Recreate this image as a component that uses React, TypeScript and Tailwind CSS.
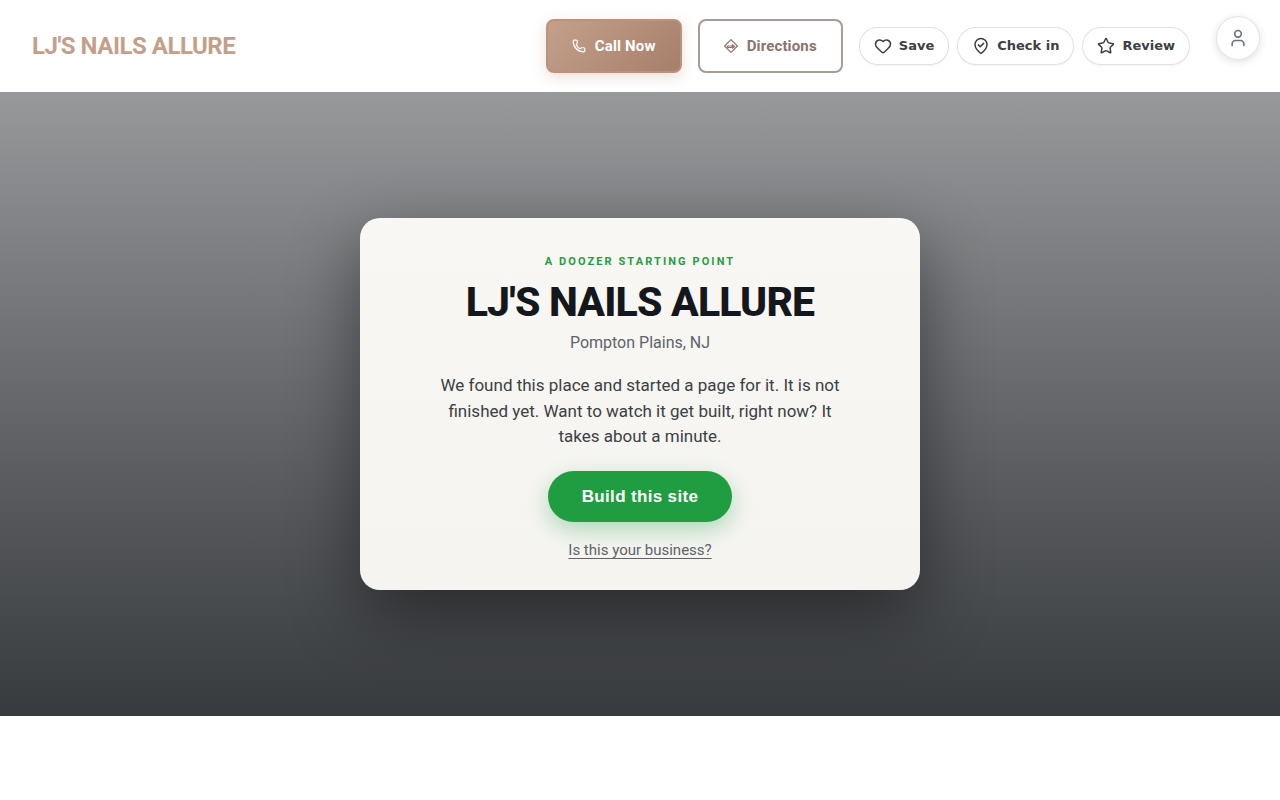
import { Heart, Phone, Star, User } from "lucide-react";
import type { ReactNode } from "react";

interface TypePill {
    label: string,
    icon: ReactNode
}

function DirectionsIcon() {
    return (
        <svg className="h-3.5 w-3.5" viewBox="0 0 24 24" fill="none" stroke="currentColor" strokeWidth="2" strokeLinejoin="round" aria-hidden="true">
            <path d="M12 1 23 12 12 23 1 12z" />
            <path d="M6 15v-3h10M6 14.500h10" />
            <path d="m14 8.500 5 4.500-5 3.500z" fill="currentColor" strokeWidth="1" />
        </svg>
    );
}

function CheckPinIcon() {
    return (
        <svg className="h-[18px] w-[18px]" viewBox="0 0 24 24" fill="none" stroke="currentColor" strokeWidth="2" strokeLinecap="round" strokeLinejoin="round" aria-hidden="true">
            <path d="M12 22s8-6 8-12a8 8 0 1 0-16 0c0 6 8 12 8 12z" />
            <path d="m8.500 10.500 2.500 2.500 4.500-4.500" />
        </svg>
    );
}

function Pill({ label, icon }: TypePill) {
    return (
        <button
            type="button"
            className="
                flex h-[38px] items-center gap-[7px] rounded-full border border-black/12 bg-white px-3.5
                font-['DejaVu_Sans',sans-serif] text-[13px] font-bold text-[#3c4043] shadow-xs
            "
        >
            {icon}
            {label}
        </button>
    );
}

function Header() {
    return (
        <header className="flex min-h-[92px] items-center bg-white pl-8">
            <a href="#" className="mr-auto text-2xl font-bold tracking-[-0.02em] text-[#c4a08a]">
                LJ'S NAILS ALLURE
            </a>
            <div className="flex items-center gap-4">
                <a
                    href="#call"
                    className="
                        flex h-[54px] items-center gap-[9px] rounded-lg border-2 border-[#bd917b] px-6
                        bg-linear-135 from-[#c4a08a] to-[#a67f6b] text-[15px] font-bold tracking-[0.01em] text-white
                        shadow-[0_4px_14px_rgba(196,160,138,0.35)]
                    "
                >
                    <Phone size={14} />
                    Call Now
                </a>
                <a
                    href="#directions"
                    className="
                        flex h-[54px] items-center gap-[9px] rounded-lg border-2 border-[#a89a95] px-6
                        text-[15px] font-bold tracking-[0.01em] text-[#8b736b]
                    "
                >
                    <DirectionsIcon />
                    Directions
                </a>
                <div className="flex gap-2">
                    <Pill label="Save" icon={<Heart size={18} />} />
                    <Pill label="Check in" icon={<CheckPinIcon />} />
                    <Pill label="Review" icon={<Star size={18} />} />
                </div>
            </div>
            <button
                type="button"
                aria-label="Account"
                className="
                    mt-4 mr-5 ml-[26px] flex h-11 w-11 items-center justify-center self-start rounded-full
                    border border-black/10 bg-white text-[#6b7280] shadow-[0_2px_8px_rgba(0,0,0,0.12)]
                "
            >
                <User size={20} />
            </button>
        </header>
    );
}

function StartCard() {
    return (
        <section
            className="
                w-full max-w-[560px] rounded-[20px] bg-linear-to-b from-[#f8f7f3] to-[#f5f4f1] px-10 pt-9 pb-7
                text-center shadow-[0_24px_70px_rgba(0,0,0,0.45)]
            "
        >
            <p className="text-[11px] leading-4 font-bold tracking-[0.19em] text-[#1f9d40]">
                A DOOZER STARTING POINT
            </p>
            <h1 className="mt-2.5 text-[41px] leading-[44px] font-extrabold tracking-[-0.02em] text-[#14171c]">
                LJ'S NAILS ALLURE
            </h1>
            <p className="mt-[7px] text-base text-[#5f6368]">Pompton Plains, NJ</p>
            <p className="mx-auto mt-[18px] max-w-[400px] text-[17px] leading-normal text-[#3c4043]">
                We found this place and started a page for it. It is not finished yet. Want to watch it get built,
                right now? It takes about a minute.
            </p>
            <button
                type="button"
                className="
                    mt-[21px] h-[51px] rounded-full bg-[#1f9d40] px-[34px] font-['Liberation_Sans',sans-serif]
                    text-[17px] font-bold tracking-[0.02em] text-white shadow-[0_8px_22px_rgba(31,157,64,0.32)]
                "
            >
                Build this site
            </button>
            <p className="mt-4 text-[15px] leading-6">
                <a href="#claim" className="text-[#5f6368] underline underline-offset-[3px]">
                    Is this your business?
                </a>
            </p>
        </section>
    );
}

export default function App() {
    return (
        <div className="min-h-screen bg-white font-[Roboto,sans-serif]">
            <Header />
            <main
                className="
                    flex min-h-[78vh] items-center justify-center
                    bg-linear-to-b from-[#98999b] via-[#65676b] to-[#383b3e]
                "
            >
                <StartCard />
            </main>
        </div>
    );
}
